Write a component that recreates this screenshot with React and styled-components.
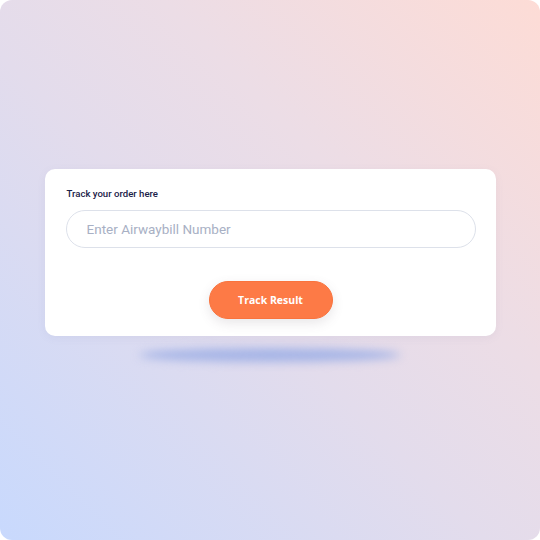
import React from 'react'
import styled, { createGlobalStyle } from 'styled-components'

const GlobalStyle = createGlobalStyle`
  html, body {
    margin: 0;
    padding: 0;
    background: #ffffff;
  }
  * { box-sizing: border-box; }
`

const Frame = styled.div`
  width: 540px;
  height: 540px;
  border-radius: 12px;
  overflow: hidden;
  background: linear-gradient(45deg, #c8d9fd 0%, #e3dcec 45%, #ecdde6 65%, #fddcd6 100%);
  display: flex;
  flex-direction: column;
  align-items: center;
  padding-top: 169px;
`

const Card = styled.div`
  width: 451px;
  background: #ffffff;
  border-radius: 10px;
  padding: 18px 20px 17px 21px;
  box-shadow: 0 2px 8px rgba(120, 110, 150, 0.08);
  display: flex;
  flex-direction: column;
`

const Label = styled.label`
  font-family: Roboto, "Liberation Sans", sans-serif;
  font-size: 9.6px;
  font-weight: 500;
  color: #1a2148;
  margin-left: 1px;
  line-height: 13px;
`

const Input = styled.input`
  margin-top: 10px;
  width: 410px;
  height: 38px;
  border: 1px solid #dde1ea;
  border-radius: 19px;
  padding: 0 20px;
  font-family: Roboto, "Liberation Sans", sans-serif;
  font-size: 13.5px;
  color: #333;
  outline: none;
  &::placeholder {
    color: #a8b0c4;
  }
`

const Actions = styled.div`
  display: flex;
  justify-content: center;
  margin-top: 33px;
`

const Button = styled.button`
  width: 124px;
  height: 38px;
  border: 1px solid #f9733d;
  border-radius: 19px;
  background: #fd7a46;
  color: #ffffff;
  font-family: "Open Sans", "Liberation Sans", sans-serif;
  font-size: 10.5px;
  font-weight: 700;
  box-shadow: 0 4px 12px rgba(90, 80, 90, 0.14);
  cursor: pointer;
`

const FloorShadow = styled.div`
  margin-top: 12px;
  width: 262px;
  height: 14px;
  border-radius: 50%;
  background: #a5b4e6;
  filter: blur(5px);
`

const App = () => {
  return (
    <>
      <GlobalStyle />
      <Frame>
        <Card>
          <Label htmlFor="awb">Track your order here</Label>
          <Input id="awb" placeholder="Enter Airwaybill Number" />
          <Actions>
            <Button>Track Result</Button>
          </Actions>
        </Card>
        <FloorShadow />
      </Frame>
    </>
  )
}

export default App
